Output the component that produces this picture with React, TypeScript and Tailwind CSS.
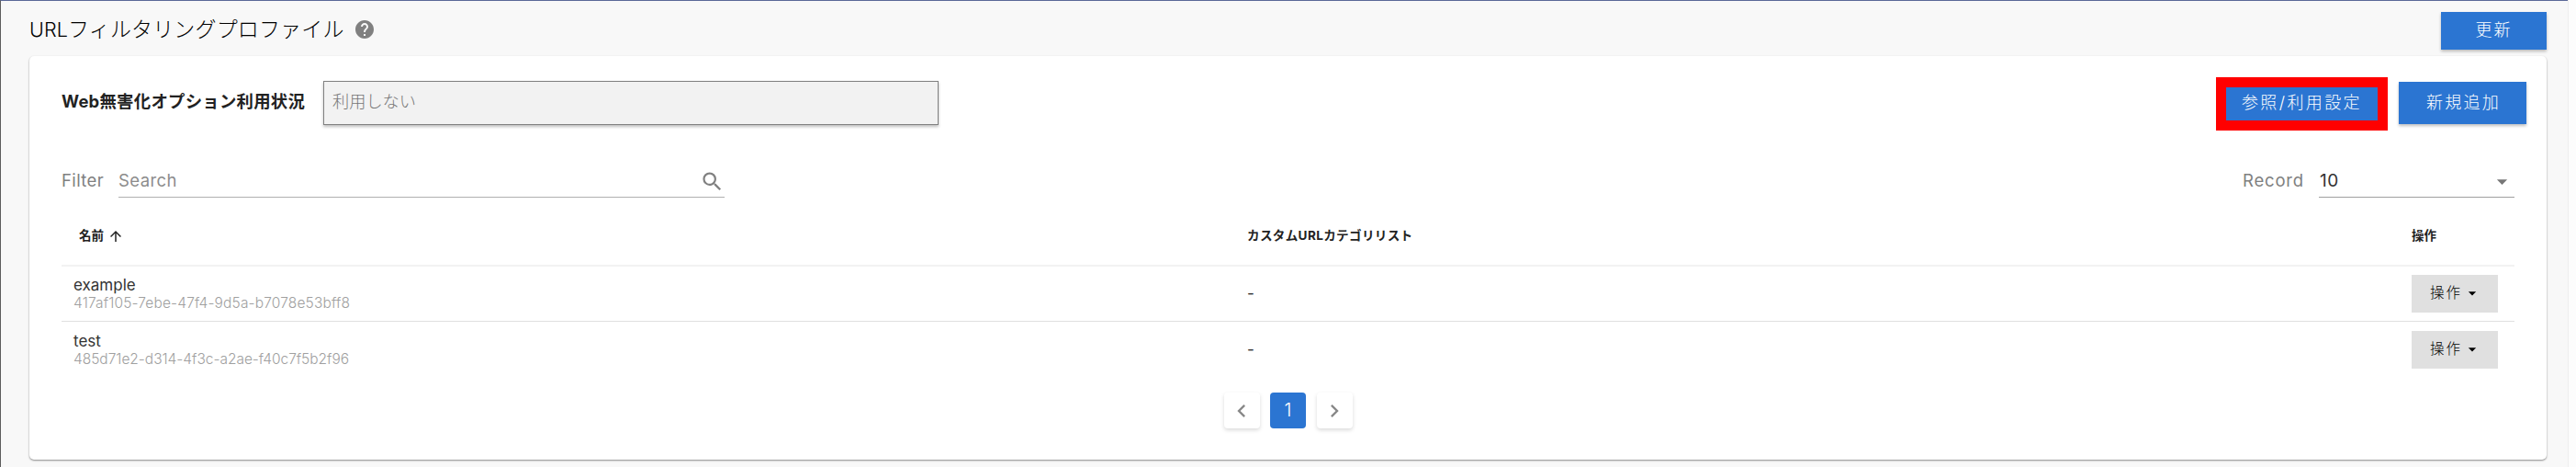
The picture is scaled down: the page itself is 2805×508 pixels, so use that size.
import { MdArrowDropDown, MdArrowUpward, MdChevronLeft, MdChevronRight, MdHelp, MdSearch } from "react-icons/md";

const PROFILES = [
  { id: "417af105-7ebe-47f4-9d5a-b7078e53bff8", name: "example", idClass: "tracking-[0.15px]" },
  { id: "485d71e2-d314-4f3c-a2ae-f40c7f5b2f96", name: "test", idClass: "tracking-[-0.02px]" },
];

const SHADOW = "shadow-[0_2px_3px_rgba(0,0,0,0.25)]";

function PageHeader() {
  return (
    <header className="flex h-[60px] items-start justify-between pl-[31px] pr-[23px]">
      <div className="flex items-center gap-[10px] pt-[14px]">
        <h1 className="text-[23px] leading-[34px] font-light tracking-[0.15px] whitespace-nowrap text-black">
          <span className="text-[21.5px]">URL</span>フィルタリングプロファイル
        </h1>
        <MdHelp className="mb-px size-6 text-[#808080]" />
      </div>
      <button className={`mt-3 h-[41px] w-[115px] bg-[#2b75d2] pb-[2px] text-[18px] font-light tracking-[2px] text-white ${SHADOW}`}>
        更新
      </button>
    </header>
  );
}

function OptionRow() {
  return (
    <div className="flex h-[58px] items-center">
      <span className="w-[285px] pb-[5px] text-[18.4px] font-bold tracking-[0.25px] whitespace-nowrap text-[#222]">
        Web無害化オプション利用状況
      </span>
      <div
        className={`mb-[2px] flex h-12 w-[670px] items-center border border-[#808080] bg-[#f2f2f2] pb-[3px] pl-[9px] text-[18.2px] font-light text-[#777] ${SHADOW}`}
      >
        利用しない
      </div>
      <div className="ml-auto flex items-center gap-3">
        <button className="h-[58px] w-[187px] border-[11px] border-[#f00] bg-[#2b75d2] pb-[3px] text-[18px] font-light tracking-[2.4px] whitespace-nowrap text-white">
          参照/利用設定
        </button>
        <button className={`mb-[2px] h-[46px] w-[139px] bg-[#2b75d2] pb-[2px] pl-[2px] text-[18px] font-light tracking-[2.2px] text-white ${SHADOW}`}>
          新規追加
        </button>
      </div>
    </div>
  );
}

function FilterRow() {
  return (
    <div className="mt-[35px] flex h-[38px] justify-between text-[18.5px] leading-[38px] tracking-[0.4px] text-[#808080]">
      <div className="flex">
        <label className="w-[62px]">Filter</label>
        <div className="flex w-[660px] items-center justify-between border-b border-[#b0b0b0] text-[#8c8c8c]">
          <span>Search</span>
          <MdSearch className="mt-[3px] size-[27px] text-[#808080]" />
        </div>
      </div>
      <div className="mr-[13px] flex">
        <label className="w-[83px] tracking-[0.8px]">Record</label>
        <div className="flex w-[213px] items-center justify-between border-b border-[#a0a0a0] pl-[1px]">
          <span className="pt-[2px] text-[19px] text-[#333]">10</span>
          <MdArrowDropDown className="mt-[3px] size-[27px] text-[#777]" />
        </div>
      </div>
    </div>
  );
}

function ProfileTable() {
  const cols = "grid grid-cols-[1277px_1268px_1fr]";
  return (
    <div className="mr-[13px]">
      <div className={`${cols} h-[75px] items-start border-b-2 border-[#f2f2f2] pt-[29px] text-[13.5px] leading-6 font-bold text-[#222]`}>
        <div className="flex items-center gap-1 pl-[19px]">
          名前
          <MdArrowUpward className="mt-[2px] size-[18px]" />
        </div>
        <div className="pl-[14px] tracking-[0.4px]">カスタムURLカテゴリリスト</div>
        <div className="pl-[14px]">操作</div>
      </div>
      {PROFILES.map((p, i) => (
        <div key={p.id} className={`${cols} items-center ${i === 0 ? "h-[60px] border-b border-[#e0e0e0]" : "h-[61px]"}`}>
          <div className="pl-[13px] whitespace-nowrap">
            <div className="text-[17px] leading-5 text-[#333]">{p.name}</div>
            <div className={`text-[15.5px] leading-5 font-light text-[#a0a0a0] ${p.idClass}`}>{p.id}</div>
          </div>
          <div className="pl-[14px] text-[17px] text-[#333]">-</div>
          <div className="pl-[14px]">
            <button className="flex h-[41px] w-[94px] items-center bg-[#e0e0e0] pb-px pl-5 text-[15.5px] font-light tracking-[2px] text-black">
              操作
              <MdArrowDropDown className="ml-px size-5" />
            </button>
          </div>
        </div>
      ))}
    </div>
  );
}

function Pagination() {
  const item = "flex size-[39px] items-center justify-center rounded-[4px]";
  return (
    <nav className="mt-[16px] mr-[13px] flex justify-center gap-[11.5px]">
      <button className={`${item} shadow-[0_2px_4px_rgba(0,0,0,0.15)]`}>
        <MdChevronLeft className="size-7 text-[#888]" />
      </button>
      <button className={`${item} bg-[#2b75d2] pb-[2px] text-[20px] font-light text-white`}>1</button>
      <button className={`${item} shadow-[0_2px_4px_rgba(0,0,0,0.15)]`}>
        <MdChevronRight className="size-7 text-[#888]" />
      </button>
    </nav>
  );
}

export default function App() {
  return (
    <div className="flex h-[508px] w-[2805px] overflow-hidden bg-[#fcfcfc] font-['Inter','Noto_Sans_CJK_JP',sans-serif]">
      <div className="h-full w-[2796px] border-t border-l border-t-[#5a6898] border-l-[#5c5c5c] bg-[#f8f8f8]">
        <PageHeader />
        <main className="ml-[31px] h-[439px] w-[2741px] rounded-[5px] bg-white pt-[23px] pr-[22px] pl-[35px] shadow-[0_1px_2px_rgba(0,0,0,0.45)]">
          <OptionRow />
          <FilterRow />
          <ProfileTable />
          <Pagination />
        </main>
      </div>
      <div className="h-full w-[9px] border-l border-[#eee]" />
    </div>
  );
}
